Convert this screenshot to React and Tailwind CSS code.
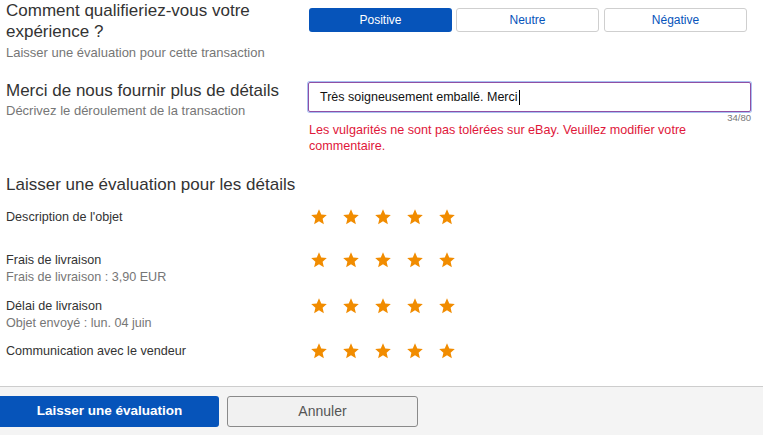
import React from 'react';

const Star = () => (
    <svg viewBox="0 0 24 24" className="w-[18px] h-[18px] shrink-0" fill="#f18c00">
        <path d="M12 1.8l3 6.9 7.4.7-5.6 4.9 1.7 7.3L12 17.7l-6.5 3.9 1.7-7.3-5.6-4.9 7.4-.7z" />
    </svg>
);

const rows = [
    { title: 'Description de l\'objet', sub: null, h: 'h-[43px]' },
    { title: 'Frais de livraison', sub: 'Frais de livraison : 3,90 EUR', h: 'h-[46px]' },
    { title: 'Délai de livraison', sub: 'Objet envoyé : lun. 04 juin', h: 'h-[45px]' },
    { title: 'Communication avec le vendeur', sub: null, h: 'h-[30px]' },
];

const App = () => {
    return (
        <div className="h-[435px] w-[763px] flex flex-col bg-white font-['Liberation_Sans',Arial,sans-serif] overflow-hidden">
            <div className="flex-1 pl-[6px]">
                {/* experience */}
                <div className="flex">
                    <div className="w-[302px]">
                        <h2 className="text-[17px] leading-[21px] text-[#333]">Comment qualifieriez-vous votre expérience ?</h2>
                        <p className="mt-[3px] text-[13px] leading-[16px] text-[#767676]">Laisser une évaluation pour cette transaction</p>
                    </div>
                    <div className="pt-[8px] pl-px flex gap-[4px] text-[12px]">
                        <button className="w-[143px] h-[24px] rounded-[3px] bg-[#0654ba] text-white">Positive</button>
                        <button className="w-[143px] h-[24px] rounded-[3px] border border-[#cfcfcf] bg-white text-[#0654ba]">Neutre</button>
                        <button className="ml-px w-[143px] h-[24px] rounded-[3px] border border-[#cfcfcf] bg-white text-[#0654ba]">Négative</button>
                    </div>
                </div>

                {/* comment */}
                <div className="flex mt-[19px]">
                    <div className="w-[302px]">
                        <h2 className="text-[17px] leading-[21px] text-[#333]">Merci de nous fournir plus de détails</h2>
                        <p className="mt-[2px] text-[13px] leading-[16px] text-[#767676]">Décrivez le déroulement de la transaction</p>
                    </div>
                    <div className="w-[443px] mt-[2px]">
                        <div className="h-[30px] rounded-[2px] border border-[#8f4fa4] shadow-[0_0_0_1px_#a9c0f2] flex items-center pl-[11px] text-[12.5px] text-[#111]">
                            Très soigneusement emballé. Merci
                            <span className="ml-px w-px h-[15px] bg-black" />
                        </div>
                        <div className="mt-px h-[9px] text-right text-[9.5px] leading-[9px] text-[#767676]">34/80</div>
                        <p className="text-[12.6px] leading-[16px] text-[#e0173a] pl-px">
                            Les vulgarités ne sont pas tolérées sur eBay. Veuillez modifier votre commentaire.
                        </p>
                    </div>
                </div>

                {/* details */}
                <h2 className="mt-[20px] text-[17px] leading-[21px] text-[#333]">Laisser une évaluation pour les détails</h2>
                <div className="mt-[14px] flex flex-col">
                    {rows.map((r) => (
                        <div key={r.title} className={`flex ${r.h}`}>
                            <div className="w-[302px] text-[12.6px] leading-[16px]">
                                <div className="text-[#333]">{r.title}</div>
                                {r.sub && <div className="mt-px text-[#767676]">{r.sub}</div>}
                            </div>
                            <div className="ml-[2px] -mt-px flex gap-[14px] items-start">
                                <Star /><Star /><Star /><Star /><Star />
                            </div>
                        </div>
                    ))}
                </div>
            </div>

            {/* footer */}
            <div className="h-[49px] border-t border-[#cdcdcd] bg-[#f4f4f4] pt-[9px] flex gap-[8px]">
                <button className="w-[219px] h-[31px] rounded-r-[3px] bg-[#0654ba] text-white font-bold text-[13.5px]">Laisser une évaluation</button>
                <button className="w-[191px] h-[31px] rounded-[3px] border border-[#8a8a8a] bg-[#f1f1f1] text-[#555] text-[14px]">Annuler</button>
            </div>
        </div>
    );
};

export default App;
